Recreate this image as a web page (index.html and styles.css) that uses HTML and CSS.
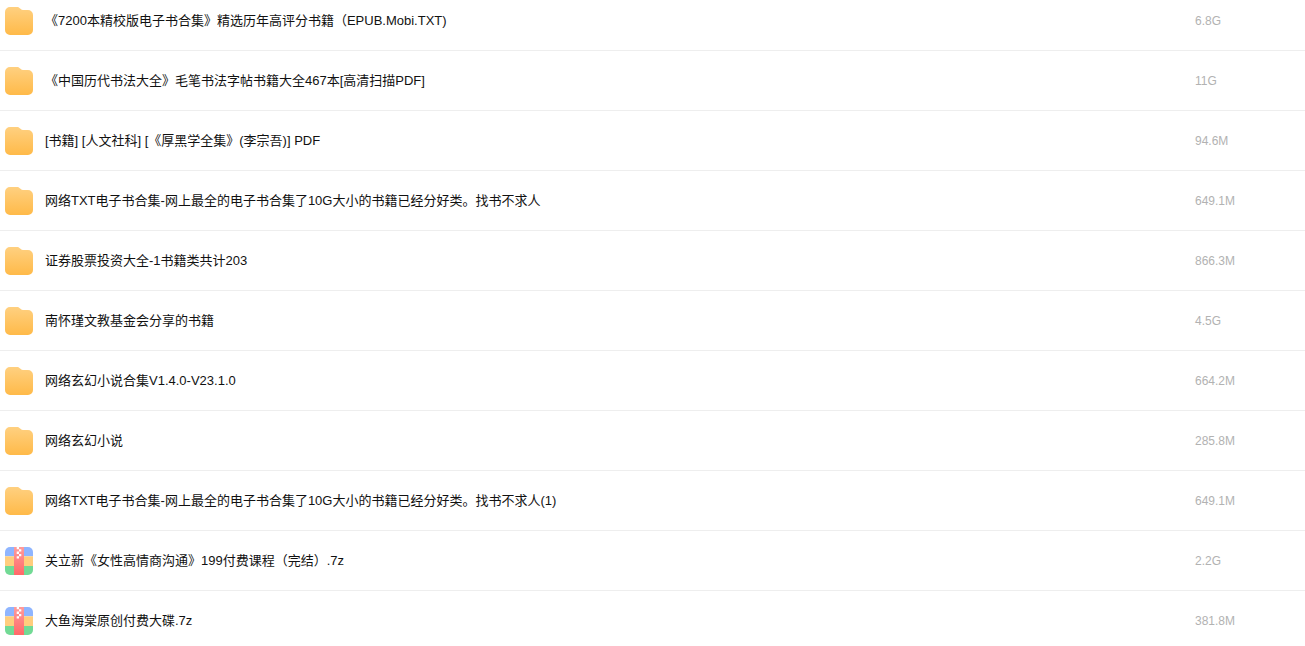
FILE: index.html
```
<!DOCTYPE html>
<html lang="zh-CN">
<head>
    <meta charset="UTF-8">
    <meta name="viewport" content="width=device-width, initial-scale=1.0">
    <title>书籍</title>
    <link rel="stylesheet" href="styles.css">
</head>
<body>
    <!-- 图标 -->
    <svg class="sprite" aria-hidden="true">
        <defs>
            <linearGradient id="folder-fill" x1="0" y1="0" x2="0" y2="1">
                <stop offset="0" stop-color="#ffd080"/>
                <stop offset="1" stop-color="#ffba49"/>
            </linearGradient>
            <linearGradient id="zip-fill" x1="0" y1="0" x2="0" y2="1">
                <stop offset="0" stop-color="#ff9c9c"/>
                <stop offset="1" stop-color="#ff6868"/>
            </linearGradient>
            <clipPath id="zip-clip">
                <rect width="28" height="28" rx="5"/>
            </clipPath>
        </defs>
        <symbol id="folder" viewBox="0 0 28 28">
            <path fill="url(#folder-fill)" d="M5 0h7c1.2 0 2 .4 2.800 1.200l1 .9c.6.6 1.200.9 2.200.9h5a5 5 0 0 1 5 5v15a5 5 0 0 1-5 5H5a5 5 0 0 1-5-5V5a5 5 0 0 1 5-5z"/>
        </symbol>
        <symbol id="archive" viewBox="0 0 28 28">
            <g clip-path="url(#zip-clip)">
                <rect width="28" height="9.3" fill="#8fb5ff"/>
                <rect y="9.3" width="28" height="9.7" fill="#ffcd7d"/>
                <rect y="19" width="28" height="9" fill="#72da95"/>
                <rect x="9" width="10" height="28" fill="url(#zip-fill)"/>
                <path fill="#fff" d="M11.700 0H14v2.300h-2.300zM14 2.300h2.300v2.300H14zM11.700 4.600H14v2.300h-2.300zM14 6.900h2.300v2.300H14zM11.700 9.200H14v2.300h-2.300z"/>
            </g>
        </symbol>
    </svg>

    <table class="files">
        <tbody>
            <tr>
                <td class="name"><div class="file"><svg class="icon"><use href="#folder"/></svg><span>《7200本精校版电子书合集》精选历年高评分书籍（EPUB.Mobi.TXT)</span></div></td>
                <td class="size">6.8G</td>
            </tr>
            <tr>
                <td class="name"><div class="file"><svg class="icon"><use href="#folder"/></svg><span>《中国历代书法大全》毛笔书法字帖书籍大全467本[高清扫描PDF]</span></div></td>
                <td class="size">11G</td>
            </tr>
            <tr>
                <td class="name"><div class="file"><svg class="icon"><use href="#folder"/></svg><span>[书籍] [人文社科] [《厚黑学全集》(李宗吾)] PDF</span></div></td>
                <td class="size">94.6M</td>
            </tr>
            <tr>
                <td class="name"><div class="file"><svg class="icon"><use href="#folder"/></svg><span>网络TXT电子书合集-网上最全的电子书合集了10G大小的书籍已经分好类。找书不求人</span></div></td>
                <td class="size">649.1M</td>
            </tr>
            <tr>
                <td class="name"><div class="file"><svg class="icon"><use href="#folder"/></svg><span>证券股票投资大全-1书籍类共计203</span></div></td>
                <td class="size">866.3M</td>
            </tr>
            <tr>
                <td class="name"><div class="file"><svg class="icon"><use href="#folder"/></svg><span>南怀瑾文教基金会分享的书籍</span></div></td>
                <td class="size">4.5G</td>
            </tr>
            <tr>
                <td class="name"><div class="file"><svg class="icon"><use href="#folder"/></svg><span>网络玄幻小说合集V1.4.0-V23.1.0</span></div></td>
                <td class="size">664.2M</td>
            </tr>
            <tr>
                <td class="name"><div class="file"><svg class="icon"><use href="#folder"/></svg><span>网络玄幻小说</span></div></td>
                <td class="size">285.8M</td>
            </tr>
            <tr>
                <td class="name"><div class="file"><svg class="icon"><use href="#folder"/></svg><span>网络TXT电子书合集-网上最全的电子书合集了10G大小的书籍已经分好类。找书不求人(1)</span></div></td>
                <td class="size">649.1M</td>
            </tr>
            <tr>
                <td class="name"><div class="file"><svg class="icon"><use href="#archive"/></svg><span>关立新《女性高情商沟通》199付费课程（完结）.7z</span></div></td>
                <td class="size">2.2G</td>
            </tr>
            <tr>
                <td class="name"><div class="file"><svg class="icon"><use href="#archive"/></svg><span>大鱼海棠原创付费大碟.7z</span></div></td>
                <td class="size">381.8M</td>
            </tr>
        </tbody>
    </table>
</body>
</html>
```
FILE: styles.css
```
* {
    box-sizing: border-box;
    margin: 0;
    padding: 0;
}

body {
    background: #fff;
    color: #111;
    font-family: "Liberation Sans", Arial, "Noto Sans CJK SC", sans-serif;
    font-size: 13px;
    line-height: 28px;
    text-spacing-trim: space-all;
}

.sprite {
    position: absolute;
    width: 0;
    height: 0;
}

.files {
    width: 100%;
    border-collapse: separate;
    border-spacing: 0;
}

.files td {
    padding: 16px 0 15px;
    border-bottom: 1px solid #eee;
    vertical-align: top;
}

.files tr:first-child td {
    padding-top: 7px;
}

.files tr:last-child td {
    padding-bottom: 0;
    border-bottom: none;
}

.files .name {
    padding-left: 5px;
}

.file {
    display: flex;
    gap: 12px;
}

.icon {
    flex: none;
    width: 28px;
    height: 28px;
}

.files .size {
    width: 110px;
    color: #b2b2b2;
    font-size: 12px;
}
```
